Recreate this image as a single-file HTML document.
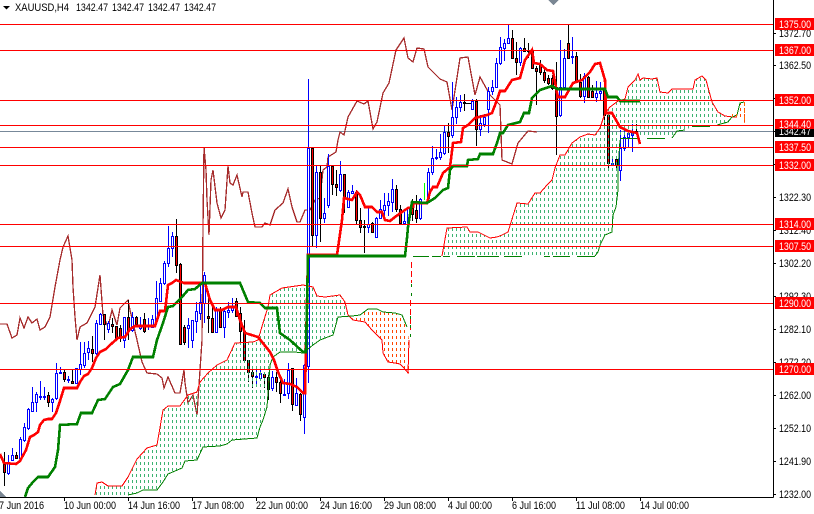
<!DOCTYPE html>
<html>
<head>
<meta charset="utf-8">
<style>
html,body{margin:0;padding:0;background:#fff;width:814px;height:514px;overflow:hidden}
svg{display:block}
text{font-family:"Liberation Sans",sans-serif;font-size:11px}
</style>
</head>
<body>
<svg width="814" height="514" viewBox="0 0 814 514" xmlns="http://www.w3.org/2000/svg">
<defs>
<pattern id="g" patternUnits="userSpaceOnUse" width="4" height="6"><rect x="0" y="0" width="1" height="3" fill="#3CB371"/></pattern>
<pattern id="o" patternUnits="userSpaceOnUse" width="4" height="6"><rect x="0" y="0" width="1" height="3" fill="#FF4500"/></pattern>
<clipPath id="c"><rect x="0" y="0" width="773" height="497"/></clipPath>
</defs>
<rect width="814" height="514" fill="#fff"/>
<g clip-path="url(#c)" shape-rendering="crispEdges" fill="none">
<path d="M0 131.5H773" stroke="#778899"/>
<!-- chikou -->
<polyline stroke="#A52A2A" stroke-width="1.3" points="0,324 7,324 12,338 17,335 20,318 24,328 28,317 32,323 37,319 40,330 45,327 50,317 55,287 60,260 63,247 68,236 72,260 73,287 75,317 77,340 80,327 87,323 95,307 100,275 103,315 108,327 112,310 117,325 120,308 128,300 130,310 137,340 142,362 147,373 157,374 162,378 164,388 168,377 175,393 180,393 184,370 185,383 188,403 193,395 197,415 200,370 202,340 203,227 204,147 206,170 207,200 209,235 211,180 213,170 217,203 221,218 225,210 228,166 230,183 233,185 237,175 242,197 243,192 248,192 252,213 255,227 262,227 265,223 270,225 275,210 283,203 288,189 292,207 297,222 300,222 305,210 310,210 315,200 320,198 323,170 327,167 328,157 336,152 338,140 340,132 344,135 348,117 357,101 364,104 368,101 373,129 377,122 383,93 389,83 396,50 404,38 408,58 413,62 417,48 424,49 428,67 440,79 447,82 452,110 460,58 468,57 475,95 480,77 490,95 500,105 502,160 512,164 518,143 528,131 537,132"/>
<!-- bull wicks -->
<path stroke="#00f" d="M8.5 455V475M12.5 448V461M20.5 437V459M24.5 423V442M28.5 408V430M32.5 387V412M36.5 392V412M40.5 381V400M44.5 387V400M52.5 398V412M56.5 363V400M60.5 367V374M68.5 376V383M76.5 368V384M80.5 342V375M84.5 342V368M88.5 341V360M96.5 320V355M100.5 313V325M108.5 321V333M124.5 317V348M132.5 312V332M140.5 317V330M148.5 318V330M152.5 315V328M156.5 281V325M160.5 278V302M164.5 261V285M168.5 226V267M172.5 232V257M188.5 318V348M192.5 320V348M196.5 302V333M200.5 285V320M204.5 272V323M216.5 307V333M224.5 310V338M228.5 302V318M232.5 298V313M256.5 368V387M260.5 369V379M272.5 371V391M284.5 379V395M288.5 363V399M296.5 378V406M304.5 364V434M308.5 79V383M316.5 165V248M324.5 198V223M328.5 154V208M340.5 161V192M348.5 190V208M352.5 185V194M368.5 208V233M376.5 217V238M380.5 200V219M384.5 193V217M388.5 193V216M392.5 179V212M404.5 212V225M408.5 207V224M420.5 198V220M428.5 168V200M432.5 146V175M436.5 149V160M440.5 134V160M444.5 126V155M452.5 82V138M456.5 97V124M460.5 95V112M472.5 99V110M480.5 115V136M484.5 114V127M488.5 87V133M492.5 80V95M496.5 58V88M500.5 37V65M504.5 39V61M508.5 25V44M520.5 47V66M560.5 40V117M564.5 49V88M572.5 37V64M584.5 73V103M596.5 81V102M600.5 82V100M612.5 157V165M620.5 130V181M624.5 126V151M628.5 131V148M632.5 124V152"/>
<!-- bull bodies -->
<path stroke="#00f" fill="#fff" d="M7.5 463.5h2V473.5h-2zM11.5 455.5h2V460.5h-2zM19.5 439.5h2V458.5h-2zM23.5 427.5h2V440.5h-2zM27.5 409.5h2V428.5h-2zM31.5 402.5h2V411.5h-2zM35.5 394.5h2V402.5h-2zM39.5 396.5h2V397.5h-2zM43.5 396.5h2V397.5h-2zM51.5 399.5h2V402.5h-2zM55.5 373.5h2V398.5h-2zM59.5 372.5h2V373.5h-2zM67.5 379.5h2V380.5h-2zM75.5 368.5h2V383.5h-2zM79.5 364.5h2V369.5h-2zM83.5 353.5h2V365.5h-2zM87.5 348.5h2V352.5h-2zM95.5 323.5h2V353.5h-2zM99.5 314.5h2V324.5h-2zM107.5 323.5h2V329.5h-2zM123.5 317.5h2V340.5h-2zM131.5 317.5h2V330.5h-2zM139.5 325.5h2V328.5h-2zM151.5 319.5h2V327.5h-2zM155.5 298.5h2V320.5h-2zM159.5 283.5h2V301.5h-2zM163.5 263.5h2V283.5h-2zM167.5 248.5h2V263.5h-2zM171.5 236.5h2V248.5h-2zM187.5 325.5h2V328.5h-2zM191.5 320.5h2V340.5h-2zM195.5 311.5h2V321.5h-2zM199.5 302.5h2V313.5h-2zM203.5 275.5h2V303.5h-2zM215.5 310.5h2V332.5h-2zM223.5 311.5h2V327.5h-2zM227.5 310.5h2V312.5h-2zM231.5 306.5h2V310.5h-2zM255.5 376.5h2V377.5h-2zM259.5 373.5h2V378.5h-2zM271.5 377.5h2V388.5h-2zM283.5 394.5h2V395.5h-2zM287.5 370.5h2V393.5h-2zM295.5 393.5h2V405.5h-2zM303.5 365.5h2V417.5h-2zM307.5 148.5h2V366.5h-2zM315.5 172.5h2V235.5h-2zM323.5 213.5h2V218.5h-2zM327.5 166.5h2V205.5h-2zM339.5 174.5h2V190.5h-2zM347.5 192.5h2V207.5h-2zM351.5 191.5h2V193.5h-2zM367.5 224.5h2V227.5h-2zM375.5 218.5h2V237.5h-2zM379.5 209.5h2V218.5h-2zM383.5 205.5h2V210.5h-2zM387.5 201.5h2V205.5h-2zM391.5 189.5h2V202.5h-2zM403.5 221.5h2V223.5h-2zM407.5 208.5h2V222.5h-2zM419.5 199.5h2V218.5h-2zM427.5 172.5h2V198.5h-2zM431.5 158.5h2V172.5h-2zM435.5 157.5h2V158.5h-2zM439.5 152.5h2V157.5h-2zM443.5 132.5h2V153.5h-2zM451.5 117.5h2V135.5h-2zM455.5 107.5h2V117.5h-2zM459.5 102.5h2V107.5h-2zM471.5 101.5h2V109.5h-2zM479.5 123.5h2V129.5h-2zM483.5 117.5h2V124.5h-2zM487.5 91.5h2V109.5h-2zM491.5 87.5h2V91.5h-2zM495.5 63.5h2V87.5h-2zM499.5 47.5h2V63.5h-2zM503.5 43.5h2V48.5h-2zM507.5 38.5h2V43.5h-2zM519.5 48.5h2V62.5h-2zM559.5 87.5h2V115.5h-2zM563.5 58.5h2V87.5h-2zM571.5 56.5h2V57.5h-2zM583.5 76.5h2V96.5h-2zM595.5 93.5h2V97.5h-2zM599.5 91.5h2V93.5h-2zM611.5 163.5h2V165.5h-2zM619.5 148.5h2V170.5h-2zM623.5 137.5h2V148.5h-2zM627.5 133.5h2V137.5h-2zM631.5 133.5h2V135.5h-2z"/>
<path stroke="#0f0" d="M424.5 183V200"/>
<!-- bear wicks -->
<path stroke="#000" d="M4.5 452V486M16.5 452V458M48.5 392V407M64.5 370V382M72.5 370V384M92.5 336V362M104.5 314V340M112.5 318V333M116.5 326V340M120.5 325V342M128.5 300V340M136.5 316V327M144.5 313V333M176.5 219V273M180.5 263V345M184.5 325V345M208.5 297V333M212.5 303V333M220.5 307V328M236.5 298V317M240.5 307V345M244.5 320V362M248.5 360V382M252.5 369V388M264.5 372V388M268.5 372V400M276.5 372V392M280.5 378V403M292.5 368V411M300.5 393V421M312.5 148V247M320.5 166V242M332.5 166V195M336.5 170V196M344.5 174V213M356.5 190V225M360.5 208V233M364.5 220V253M372.5 222V233M396.5 185V212M400.5 205V224M412.5 199V221M416.5 195V223M448.5 123V153M464.5 94V111M476.5 99V146M512.5 30V59M516.5 42V75M524.5 38V52M528.5 43V58M532.5 48V69M536.5 66V105M540.5 60V75M544.5 68V83M548.5 75V85M552.5 75V90M556.5 62V155M568.5 25V59M576.5 52V83M580.5 74V98M588.5 76V98M592.5 85V98M604.5 88V125M608.5 113V170M616.5 158V170M636.5 124V133"/>
<!-- bear bodies -->
<path stroke="#000" fill="#f00" d="M3.5 464.5h2V472.5h-2zM15.5 455.5h2V458.5h-2zM47.5 395.5h2V402.5h-2zM63.5 372.5h2V379.5h-2zM71.5 381.5h2V383.5h-2zM91.5 349.5h2V353.5h-2zM103.5 314.5h2V324.5h-2zM111.5 324.5h2V326.5h-2zM115.5 326.5h2V338.5h-2zM119.5 328.5h2V338.5h-2zM127.5 317.5h2V331.5h-2zM135.5 317.5h2V324.5h-2zM143.5 319.5h2V331.5h-2zM175.5 236.5h2V265.5h-2zM179.5 264.5h2V344.5h-2zM183.5 327.5h2V342.5h-2zM207.5 316.5h2V318.5h-2zM211.5 318.5h2V332.5h-2zM219.5 310.5h2V327.5h-2zM235.5 301.5h2V316.5h-2zM239.5 313.5h2V331.5h-2zM243.5 331.5h2V360.5h-2zM247.5 360.5h2V372.5h-2zM251.5 372.5h2V376.5h-2zM263.5 374.5h2V377.5h-2zM267.5 377.5h2V389.5h-2zM275.5 377.5h2V382.5h-2zM279.5 382.5h2V393.5h-2zM291.5 368.5h2V404.5h-2zM299.5 394.5h2V414.5h-2zM311.5 148.5h2V235.5h-2zM319.5 172.5h2V218.5h-2zM331.5 166.5h2V184.5h-2zM335.5 184.5h2V187.5h-2zM343.5 174.5h2V198.5h-2zM355.5 192.5h2V220.5h-2zM359.5 220.5h2V227.5h-2zM363.5 226.5h2V227.5h-2zM371.5 223.5h2V232.5h-2zM395.5 189.5h2V209.5h-2zM399.5 209.5h2V223.5h-2zM411.5 208.5h2V214.5h-2zM415.5 210.5h2V218.5h-2zM447.5 132.5h2V136.5h-2zM463.5 102.5h2V103.5h-2zM475.5 101.5h2V129.5h-2zM511.5 38.5h2V58.5h-2zM515.5 58.5h2V62.5h-2zM523.5 48.5h2V51.5h-2zM527.5 50.5h2V51.5h-2zM531.5 50.5h2V68.5h-2zM535.5 68.5h2V71.5h-2zM539.5 65.5h2V72.5h-2zM543.5 72.5h2V80.5h-2zM547.5 78.5h2V83.5h-2zM551.5 78.5h2V88.5h-2zM555.5 87.5h2V116.5h-2zM567.5 43.5h2V58.5h-2zM575.5 56.5h2V82.5h-2zM579.5 82.5h2V96.5h-2zM587.5 77.5h2V97.5h-2zM591.5 91.5h2V97.5h-2zM603.5 90.5h2V115.5h-2zM607.5 115.5h2V163.5h-2zM615.5 159.5h2V165.5h-2zM635.5 131.5h2V132.5h-2z"/>
<path stroke="#000" d="M466 103.5H471"/>
<!-- cloud -->
<polygon fill="url(#g)" points="95,495 97,483 102,482 108,486 122,486 128,477 137,459 147,448 157,445 163,410 168,406 180,406 188,395 197,392 200,382 208,373 217,365 227,360 235,343 253,342 258,340 263,323 268,307 270,295 282,288 303,285 313,287 317,296 325,297 340,295 345,302 348,315 353,318 352,316 338,317 333,333 320,340 313,345 303,353 295,352 280,352 273,357 270,365 267,407 263,420 260,427 257,438 232,440 227,444 220,446 203,447 197,460 185,461 182,468 168,474 163,482 157,490 143,490 137,493 128,495 95,497"/>
<polygon fill="url(#o)" points="352,316 360,315 368,309 377,309 383,312 395,313 402,315 407,327 409,340 409,373 408,373 404,368 400,364 395,363 388,362 383,353 382,340 372,330 365,322 353,320"/>
<polygon fill="url(#g)" points="442,256 447,228 467,227 470,232 478,232 490,238 497,237 502,235 508,232 517,203 528,204 535,193 540,193 547,185 552,180 555,168 560,155 565,155 572,143 580,137 588,134 595,135 600,128 605,113 610,107 618,101 625,99 628,87 635,80 638,74 640,80 643,78 652,79 657,78 660,92 668,93 672,89 693,89 695,80 702,76 706,80 712,102 718,112 725,116 733,117 728,122 717,125 710,126 692,127 685,130 677,131 672,138 620,138 618,170 618,190 616,207 613,215 612,232 605,235 600,245 598,252 595,256"/>
<polygon fill="url(#o)" points="733,117 737,115 740,103 745,102 745,123 737,117"/>
<!-- senkou A -->
<polyline stroke="#f00" points="95,495 97,483 102,482 108,486 122,486 128,477 137,459 147,448 157,445 163,410 168,406 180,406 188,395 197,392 200,382 208,373 217,365 227,360 235,343 253,342 258,340 263,323 268,307 270,295 282,288 303,285 313,287 317,296 325,297 340,295 345,302 348,315 353,320 365,322 372,330 382,340 383,353 388,362 395,363 400,364 404,368 408,373 409,340"/>
<polyline stroke="#f00" points="442,256 447,228 467,227 470,232 478,232 490,238 497,237 502,235 508,232 517,203 528,204 535,193 540,193 547,185 552,180 555,168 560,155 565,155 572,143 580,137 588,134 595,135 600,128 605,113 610,107 618,101 625,99 628,87 635,80 638,74 640,80 643,78 652,79 657,78 660,92 668,93 672,89 693,89 695,80 702,76 706,80 712,102 718,112 725,116 733,117 737,117"/>
<!-- senkou B -->
<polyline stroke="#008000" points="128,495 137,493 143,490 157,490 163,482 168,474 182,468 185,461 197,460 203,447 220,446 227,444 232,440 257,438 260,427 263,420 267,407 270,365 273,357 280,352 295,352 303,353 313,345 320,340 333,335 338,317 352,316 360,315 368,309 377,309 383,312 395,313 402,315 407,327"/>
<path stroke="#008000" d="M413 256.5H429M432 256.5H441M443 256.5H450M457 256.5H475M477 256.5H499M504 256.5H522M544 256.5H550M553 256.5H570M577 256.5H595"/>
<polyline stroke="#008000" points="595,256 598,252 600,245 605,235 612,232 613,215 616,207 618,190 618,170 620,140"/>
<path stroke="#008000" d="M620 138.5H640M647 138.5H665"/>
<polyline stroke="#008000" points="672,138 677,131 685,130"/>
<path stroke="#008000" d="M692 126.5H710"/>
<polyline stroke="#008000" points="717,125 728,122 732,117 737,115 740,103 744,102"/>
<path stroke="#f60" stroke-dasharray="4 3" d="M744.5 102V123"/>
<path stroke="#f60" d="M732.5 114V117M736.5 114V117"/>
<path stroke="#f00" stroke-dasharray="6 3" d="M411.5 262V283M410.5 300V330"/>
<path stroke="#008000" stroke-dasharray="3 6" d="M411.5 284V300M410.5 316V340"/>
<!-- tenkan -->
<polyline stroke="#f00" stroke-width="2.6" points="0,454 4,463 16,464 20,461 26,450 30,437 34,435 38,432 40,425 44,420 48,419 52,419 56,413 60,401 64,388 68,388 77,388 80,382 84,376 88,374 92,368 96,358 100,352 106,349 110,345 118,338 125,337 130,329 135,326 155,326 160,311 165,311 168,285 172,283 176,280 184,283 205,283 210,300 215,310 222,310 228,307 236,307 240,320 245,333 258,337 270,352 274,360 278,372 283,383 290,384 297,387 303,393 305,393 308,255 337,255 342,220 344,198 352,200 357,192 360,195 365,207 372,207 377,212 382,212 385,220 390,221 395,217 402,212 408,208 413,207 413,203 427,203 430,192 433,187 437,187 440,180 443,173 450,167 453,143 461,142 463,128 468,125 475,118 487,115 492,113 497,100 500,91 505,91 512,80 520,78 525,60 532,50 534,63 540,64 547,70 553,71 557,93 558,97 565,97 573,83 582,80 590,72 595,64 600,63 605,80 606,113 612,113 620,127 628,131 637,133 640,144"/>
<!-- kijun -->
<polyline stroke="#008000" stroke-width="2.6" points="25,497 28,488 33,482 38,477 48,477 55,467 58,450 60,425 77,424 81,413 92,413 98,400 105,399 113,387 120,384 128,370 133,357 153,357 157,340 163,323 168,307 173,306 182,297 188,290 195,289 202,283 225,283 240,283 248,302 260,303 265,308 277,308 280,333 287,338 290,340 303,352 306,352 308,257 308,256 405,256 407,238 408,227 412,202 427,203 435,198 443,190 448,188 450,170 453,166 467,166 468,160 478,159 480,154 493,154 497,143 500,133 503,133 508,125 520,122 524,113 529,113 532,98 540,90 552,86 557,89 605,89 608,97 617,97 620,101 640,101"/>
<!-- levels -->
<path stroke="#f00" d="M0 24.5H773M0 50.5H773M0 100.5H773M0 125.5H773M0 147.5H773M0 165.5H773M0 224.5H773M0 246.5H773M0 303.5H773M0 369.5H773"/>
<polygon fill="#7B8794" points="0,491 6,497 0,497"/>
<polygon fill="#7B8794" points="548,0 559,0 553.5,5"/>
</g>
<polygon fill="#000" points="3,6 10,6 6.5,9.5"/>
<!-- axes -->
<path shape-rendering="crispEdges" stroke="#000" fill="none" d="M773.5 0V497.5M0 497.5H773.5M64.5 497V501M128.5 497V501M192.5 497V501M256.5 497V501M320.5 497V501M384.5 497V501M448.5 497V501M512.5 497V501M576.5 497V501M640.5 497V501M773 33.5h3M773 65.5h3M773 98.5h3M773 131.5h3M773 164.5h3M773 197.5h3M773 230.5h3M773 263.5h3M773 296.5h3M773 329.5h3M773 362.5h3M773 395.5h3M773 428.5h3M773 461.5h3M773 494.5h3"/>
<!-- header -->
<text x="15" y="11" textLength="54" lengthAdjust="spacingAndGlyphs">XAUUSD,H4</text>
<text x="76" y="11" textLength="32" lengthAdjust="spacingAndGlyphs">1342.47</text>
<text x="112" y="11" textLength="32" lengthAdjust="spacingAndGlyphs">1342.47</text>
<text x="148" y="11" textLength="32" lengthAdjust="spacingAndGlyphs">1342.47</text>
<text x="184" y="11" textLength="32" lengthAdjust="spacingAndGlyphs">1342.47</text>
<!-- y scale -->
<g>
<text x="779" y="37" textLength="32" lengthAdjust="spacingAndGlyphs">1372.70</text>
<text x="779" y="69" textLength="32" lengthAdjust="spacingAndGlyphs">1362.50</text>
<text x="779" y="201" textLength="32" lengthAdjust="spacingAndGlyphs">1322.30</text>
<text x="779" y="234" textLength="32" lengthAdjust="spacingAndGlyphs">1312.40</text>
<text x="779" y="267" textLength="32" lengthAdjust="spacingAndGlyphs">1302.20</text>
<text x="779" y="300" textLength="32" lengthAdjust="spacingAndGlyphs">1292.30</text>
<text x="779" y="333" textLength="32" lengthAdjust="spacingAndGlyphs">1282.10</text>
<text x="779" y="366" textLength="32" lengthAdjust="spacingAndGlyphs">1272.20</text>
<text x="779" y="399" textLength="32" lengthAdjust="spacingAndGlyphs">1262.00</text>
<text x="779" y="432" textLength="32" lengthAdjust="spacingAndGlyphs">1252.10</text>
<text x="779" y="465" textLength="32" lengthAdjust="spacingAndGlyphs">1241.90</text>
<text x="779" y="498" textLength="32" lengthAdjust="spacingAndGlyphs">1232.00</text>
</g>
<!-- price tags -->
<g shape-rendering="crispEdges">
<rect x="775" y="125" width="39" height="12" fill="#000"/>
<rect x="775" y="18" width="39" height="12" fill="#f00"/>
<rect x="775" y="44" width="39" height="12" fill="#f00"/>
<rect x="775" y="94" width="39" height="12" fill="#f00"/>
<rect x="775" y="141" width="39" height="12" fill="#f00"/>
<rect x="775" y="159" width="39" height="12" fill="#f00"/>
<rect x="775" y="218" width="39" height="12" fill="#f00"/>
<rect x="775" y="240" width="39" height="12" fill="#f00"/>
<rect x="775" y="297" width="39" height="12" fill="#f00"/>
<rect x="775" y="363" width="39" height="12" fill="#f00"/>
</g>
<g fill="#fff">
<text x="779" y="135" textLength="32" lengthAdjust="spacingAndGlyphs">1342.47</text>
<rect x="775" y="119" width="39" height="10" fill="#f00" shape-rendering="crispEdges"/>
<text x="779" y="28" textLength="32" lengthAdjust="spacingAndGlyphs">1375.00</text>
<text x="779" y="54" textLength="32" lengthAdjust="spacingAndGlyphs">1367.00</text>
<text x="779" y="104" textLength="32" lengthAdjust="spacingAndGlyphs">1352.00</text>
<text x="779" y="128" textLength="32" lengthAdjust="spacingAndGlyphs">1344.40</text>
<text x="779" y="151" textLength="32" lengthAdjust="spacingAndGlyphs">1337.50</text>
<text x="779" y="169" textLength="32" lengthAdjust="spacingAndGlyphs">1332.00</text>
<text x="779" y="228" textLength="32" lengthAdjust="spacingAndGlyphs">1314.00</text>
<text x="779" y="250" textLength="32" lengthAdjust="spacingAndGlyphs">1307.50</text>
<text x="779" y="307" textLength="32" lengthAdjust="spacingAndGlyphs">1290.00</text>
<text x="779" y="373" textLength="32" lengthAdjust="spacingAndGlyphs">1270.00</text>
</g>
<!-- x scale -->
<g>
<text x="-1" y="509" textLength="45" lengthAdjust="spacingAndGlyphs">7 Jun 2016</text>
<text x="64" y="509" textLength="52" lengthAdjust="spacingAndGlyphs">10 Jun 00:00</text>
<text x="128" y="509" textLength="52" lengthAdjust="spacingAndGlyphs">14 Jun 16:00</text>
<text x="192" y="509" textLength="52" lengthAdjust="spacingAndGlyphs">17 Jun 08:00</text>
<text x="256" y="509" textLength="52" lengthAdjust="spacingAndGlyphs">22 Jun 00:00</text>
<text x="320" y="509" textLength="52" lengthAdjust="spacingAndGlyphs">24 Jun 16:00</text>
<text x="384" y="509" textLength="52" lengthAdjust="spacingAndGlyphs">29 Jun 08:00</text>
<text x="448" y="509" textLength="44" lengthAdjust="spacingAndGlyphs">4 Jul 00:00</text>
<text x="512" y="509" textLength="44" lengthAdjust="spacingAndGlyphs">6 Jul 16:00</text>
<text x="576" y="509" textLength="49" lengthAdjust="spacingAndGlyphs">11 Jul 08:00</text>
<text x="640" y="509" textLength="49" lengthAdjust="spacingAndGlyphs">14 Jul 00:00</text>
</g>
</svg>
</body>
</html>
